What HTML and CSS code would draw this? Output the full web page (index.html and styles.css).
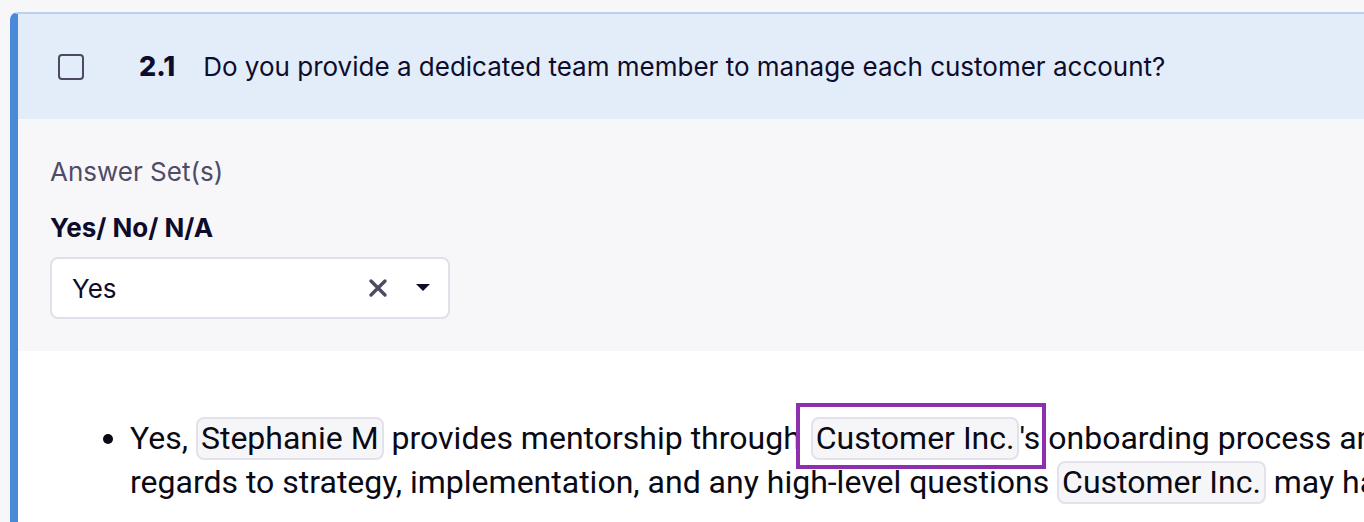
FILE: index.html
```html
<!DOCTYPE html>
<html>
<head>
<meta charset="utf-8">
<link rel="stylesheet" href="styles.css">
</head>
<body>
<div class="card">
  <div class="card-header">
    <span class="checkbox"></span>
    <span class="qnum">2.1</span>
    <span class="qtext">Do you provide a dedicated team member to manage each customer account?</span>
  </div>
  <div class="answers">
    <div class="label">Answer Set(s)</div>
    <div class="set-name">Yes/ No/ N/A</div>
    <div class="select">
      <span class="select-value">Yes</span>
      <svg class="icon-x" width="20" height="20" viewBox="0 0 20 20"><path d="M3 3 L17 17 M17 3 L3 17" stroke="#4d4a63" stroke-width="3.4" stroke-linecap="round"/></svg>
      <svg class="icon-caret" width="18" height="12" viewBox="0 0 18 12"><path d="M2 2 L16 2 L9 9 Z" fill="#0d0c2b"/></svg>
    </div>
  </div>
  <div class="body">
    <ul class="answer-list">
      <li>Yes, <span class="chip">Stephanie M</span> provides mentorship through <span class="hl"><span class="chip">Customer Inc.</span>'s</span> onboarding process and with <span class="keep">regards to strategy, implementation, and any high-level questions <span class="chip">Customer Inc.</span> may have along the way.</span></li>
    </ul>
  </div>
</div>
</body>
</html>
```
FILE: styles.css
```css
html, body {
  margin: 0;
  padding: 0;
  overflow: hidden;
}
body {
  background: #f7f7f9;
  padding: 12px 0 0 10px;
  width: 1364px;
  height: 522px;
  box-sizing: border-box;
  font-family: Inter, "Noto Sans", sans-serif;
  color: #0d0c2b;
}
.card {
  background: #ffffff;
  border-left: 8px solid #4a88d8;
  border-top: 2px solid #b8d1f0;
  border-top-left-radius: 8px;
  height: 600px;
  width: 1600px;
}
.card-header {
  background: #e3edf9;
  height: 105px;
  display: flex;
  align-items: center;
  padding-left: 40px;
}
.checkbox {
  width: 22px;
  height: 22px;
  border: 2.5px solid #4c4a62;
  border-radius: 4px;
  box-sizing: content-box;
  flex: none;
}
.qnum {
  font-weight: 800;
  font-size: 27px;
  margin-left: 55px;
}
.qtext {
  font-size: 26px;
  margin-left: 28px;
  white-space: nowrap;
}
.answers {
  background: #f7f7f9;
  padding: 35px 32px 32px;
}
.label {
  font-size: 26px;
  color: #4f4c68;
  line-height: 36px;
}
.set-name {
  font-weight: 700;
  font-size: 26px;
  line-height: 36px;
  margin-top: 20px;
}
.select {
  margin-top: 11px;
  height: 58px;
  background: #ffffff;
  border: 2px solid #e1e0ea;
  border-radius: 8px;
  display: flex;
  align-items: center;
  padding-left: 20px;
  width: 376px;
}
.select-value {
  font-size: 26px;
  flex: 1;
}
.icon-x {
  margin-right: 26px;
}
.icon-caret {
  margin-right: 16px;
}
.body {
  padding-top: 65px;
}
.answer-list {
  margin: 0;
  padding-left: 112px;
  font-family: Roboto, "Noto Sans", sans-serif;
  font-size: 32px;
  line-height: 44px;
  color: #0a0a14;
  width: 1420px;
}
.keep {
  white-space: nowrap;
}
.chip {
  display: inline-block;
  background: #f6f6f9;
  border: 2px solid #e2e1ec;
  border-radius: 8px;
  padding: 0 3px;
  line-height: 39px;
}
.hl {
  position: relative;
  display: inline-block;
  margin-left: 2px;
}
.hl::after {
  content: "";
  position: absolute;
  left: -15px;
  right: -6px;
  top: -13px;
  bottom: -9px;
  border: 4px solid #8e2fb0;
}
```
